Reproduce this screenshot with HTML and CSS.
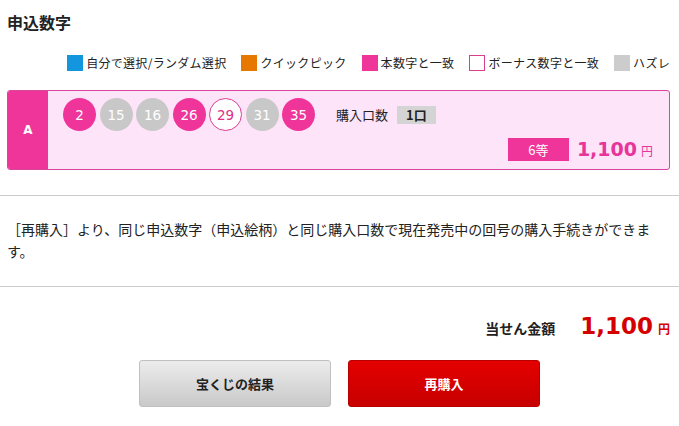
FILE: index.html
```html
<!DOCTYPE html>
<html>
<head>
  <title>申込数字</title>
  <link rel="stylesheet" href="styles.css">
</head>
<body>
  <div class="page">
    <h2 class="title">申込数字</h2>

    <ul class="legend">
      <li><span class="swatch swatch-blue"></span>自分で選択/ランダム選択</li>
      <li><span class="swatch swatch-orange"></span>クイックピック</li>
      <li><span class="swatch swatch-pink"></span>本数字と一致</li>
      <li><span class="swatch swatch-bonus"></span>ボーナス数字と一致</li>
      <li><span class="swatch swatch-gray"></span>ハズレ</li>
    </ul>

    <div class="entry">
      <div class="entry-label">A</div>
      <div class="entry-body">
        <div class="entry-top">
          <div class="balls">
            <span class="ball hit">2</span>
            <span class="ball miss">15</span>
            <span class="ball miss">16</span>
            <span class="ball hit">26</span>
            <span class="ball bonus">29</span>
            <span class="ball miss">31</span>
            <span class="ball hit">35</span>
          </div>
          <div class="count">購入口数<span class="count-value">1口</span></div>
        </div>
        <div class="prize">
          <span class="prize-rank">6等</span>
          <span class="prize-amount">1,100</span><span class="prize-yen">円</span>
        </div>
      </div>
    </div>
  </div>

  <hr class="rule">
  <p class="note">［再購入］より、同じ申込数字（申込絵柄）と同じ購入口数で現在発売中の回号の購入手続きができます。</p>
  <hr class="rule">

  <div class="total">
    <span class="total-label">当せん金額</span>
    <span class="total-amount">1,100</span><span class="total-yen">円</span>
  </div>

  <div class="actions">
    <button class="btn btn-gray">宝くじの結果</button>
    <button class="btn btn-red">再購入</button>
  </div>
</body>
</html>
```

FILE: styles.css
```css
body {
  margin: 0;
  font-family: "Noto Sans CJK JP", "DejaVu Sans", sans-serif;
  font-size: 13px;
  color: #222;
  background: #fff;
}

.page {
  padding: 0 9px 0 7px;
}

.title {
  margin: 0;
  padding-top: 12px;
  font-size: 16px;
  line-height: 20px;
  font-weight: bold;
}

.legend {
  list-style: none;
  margin: 0;
  padding: 0;
  margin-top: 22px;
  display: flex;
  justify-content: flex-end;
  gap: 15px;
  line-height: 18px;
  font-size: 12px;
  letter-spacing: 0.3px;
}

.legend li {
  display: flex;
  align-items: center;
}

.swatch {
  display: inline-block;
  width: 16px;
  height: 16px;
  margin-right: 3px;
  box-sizing: border-box;
}

.swatch-blue { background: #1496de; }
.swatch-orange { background: #e67800; }
.swatch-pink { background: #f0359a; }
.swatch-bonus { background: #fff; border: 1px solid #d8408e; }
.swatch-gray { background: #cccccc; }

.entry {
  display: flex;
  margin-top: 18px;
  height: 80px;
  box-sizing: border-box;
  border: 1px solid #d8459e;
  border-radius: 3px;
  background: #fde4f8;
  overflow: hidden;
}

.entry-label {
  width: 40px;
  background: #f0359a;
  color: #fff;
  font-family: "DejaVu Sans", sans-serif;
  font-weight: bold;
  font-size: 12px;
  display: flex;
  align-items: center;
  justify-content: center;
}

.entry-body {
  flex: 1;
  display: flex;
  flex-direction: column;
  justify-content: space-between;
  padding: 7px 16px 8px 15px;
}

.entry-top {
  display: flex;
  align-items: center;
}

.balls {
  display: flex;
  gap: 3.5px;
}

.ball {
  width: 33px;
  height: 33px;
  box-sizing: border-box;
  border-radius: 50%;
  display: flex;
  align-items: center;
  justify-content: center;
  font-family: "DejaVu Sans", sans-serif;
  font-size: 13.5px;
  color: #fff;
}

.ball.hit { background: #f0359a; }
.ball.miss { background: #c8c8c8; }
.ball.bonus { background: #fff; border: 1px solid #d8408e; color: #e0307f; }

.count {
  margin-left: 21px;
  display: flex;
  align-items: center;
}

.count-value {
  margin-left: 9px;
  background: #d4d4d4;
  padding: 0 9px;
  height: 18px;
  line-height: 18px;
  font-weight: bold;
}

.prize {
  display: flex;
  justify-content: flex-end;
  align-items: baseline;
}

.prize-rank {
  align-self: center;
  width: 61px;
  height: 23px;
  line-height: 23px;
  text-align: center;
  background: #f0359a;
  color: #fff;
  font-size: 13px;
  margin-right: 8px;
}

.prize-amount {
  font-family: "DejaVu Sans", sans-serif;
  font-weight: bold;
  font-size: 19px;
  color: #e8359a;
}

.prize-yen {
  margin-left: 4px;
  font-size: 12px;
  color: #e8359a;
}

.rule {
  border: 0;
  border-top: 1px solid #cccccc;
  margin: 0;
}

.page + .rule {
  margin-top: 25px;
}

.note {
  margin: 0;
  padding: 22px 25px 24px 7px;
  font-size: 14px;
  line-height: 22px;
}

.total {
  display: flex;
  justify-content: flex-end;
  align-items: baseline;
  padding: 26px 9px 0 0;
}

.total-label {
  font-weight: bold;
  font-size: 14px;
  margin-right: 25px;
}

.total-amount {
  font-family: "DejaVu Sans", sans-serif;
  font-weight: bold;
  font-size: 23px;
  color: #d40000;
}

.total-yen {
  margin-left: 5px;
  font-size: 12px;
  font-weight: bold;
  color: #d40000;
}

.actions {
  display: flex;
  justify-content: center;
  gap: 17px;
  margin-top: 21px;
}

.btn {
  width: 192px;
  height: 47px;
  border-radius: 3px;
  font-family: "Noto Sans CJK JP", sans-serif;
  font-size: 13px;
  font-weight: bold;
  cursor: pointer;
}

.btn-gray {
  background: linear-gradient(#ececec, #c9c9c9);
  border: 1px solid #c0c0c0;
  color: #222;
}

.btn-red {
  background: linear-gradient(#e40000, #c70000);
  border: 1px solid #b80000;
  color: #fff;
}
```
